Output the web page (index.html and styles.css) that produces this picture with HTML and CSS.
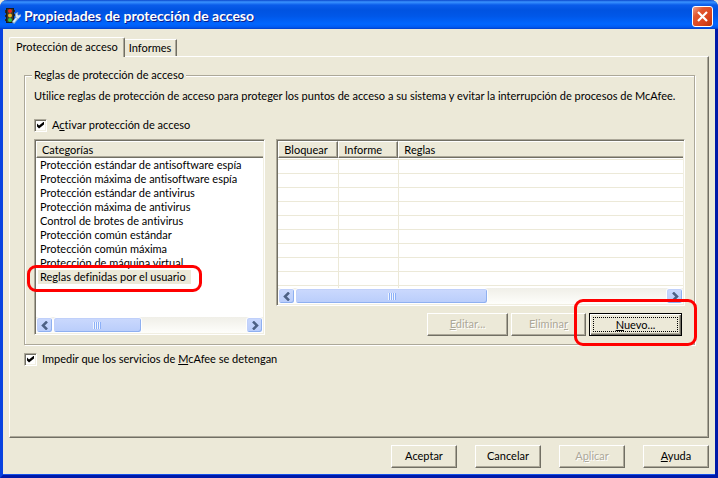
FILE: index.html
```html
<!DOCTYPE html>
<html lang="es">
<head>
<meta charset="utf-8">
<title>Propiedades de protección de acceso</title>
<link rel="stylesheet" href="styles.css">
</head>
<body>
<main class="window">
  <header class="titlebar">
    <svg class="app-icon" width="16" height="16" viewBox="0 0 16 16" aria-hidden="true">
      <path d="M0 2h2v3H0zM0 7h2v2H0zM0 11h2v2H0zM8 2h2v2H8zM8 6h2v2H8z" fill="#2b2b22"/>
      <rect x="1.5" y="0.5" width="7" height="14" fill="#3a3a2c" stroke="#1d1d18"/>
      <circle cx="5" cy="3" r="2" fill="#e8261c"/>
      <circle cx="5" cy="7.500" r="2" fill="#f0b41e"/>
      <circle cx="5" cy="12" r="2" fill="#35c33a"/>
      <path d="M8 15l5-6" stroke="#8fb4d8" stroke-width="3"/>
      <path d="M8.500 14l4-5" stroke="#e6f1fb" stroke-width="1.500"/>
      <path d="M10.500 5.500v3.500l2.500 2 3-3-.5-1.500-2 .8-1-1 .5-2z" fill="#d4e4f4" stroke="#7f9fc4" stroke-width=".6"/>
    </svg>
    <h1 class="title">Propiedades de protección de acceso</h1>
    <button class="close" type="button" aria-label="Cerrar">
      <svg width="13" height="13" viewBox="0 0 13 13" aria-hidden="true"><path d="M2 2l9 9M11 2l-9 9" stroke="#fff" stroke-width="2.200"/></svg>
    </button>
  </header>
  <div class="client">
    <div class="tabs" role="tablist">
      <button class="tab tab-active" type="button" role="tab" aria-selected="true">Protección de acceso</button>
      <button class="tab" type="button" role="tab" aria-selected="false">Informes</button>
    </div>
    <section class="panel">
      <fieldset class="group">
        <legend>Reglas de protección de acceso</legend>
        <p class="intro">Utilice reglas de protección de acceso para proteger los puntos de acceso a su sistema y evitar la interrupción de procesos de McAfee.</p>
        <div class="check">
          <input type="checkbox" id="activate" checked>
          <label for="activate">A<u>c</u>tivar protección de acceso</label>
        </div>
        <div class="columns">
          <div class="listview categories">
            <div class="rows">
              <table>
                <thead><tr><th>Categorías</th></tr></thead>
                <tbody>
                  <tr><td><span>Protección estándar de antisoftware espía</span></td></tr>
                  <tr><td><span>Protección máxima de antisoftware espía</span></td></tr>
                  <tr><td><span>Protección estándar de antivirus</span></td></tr>
                  <tr><td><span>Protección máxima de antivirus</span></td></tr>
                  <tr><td><span>Control de brotes de antivirus</span></td></tr>
                  <tr><td><span>Protección común estándar</span></td></tr>
                  <tr><td><span>Protección común máxima</span></td></tr>
                  <tr><td><span>Protección de máquina virtual</span></td></tr>
                  <tr class="selected"><td><span>Reglas definidas por el usuario</span></td></tr>
                </tbody>
              </table>
            </div>
            <div class="scrollbar">
              <button class="arrow" type="button" aria-label="Izquierda"><svg width="8" height="9" viewBox="0 0 8 9"><path d="M6 .5l-4 4 4 4"/></svg></button>
              <div class="track"><div class="thumb thumb-left"><i class="grip"></i></div></div>
              <button class="arrow" type="button" aria-label="Derecha"><svg width="8" height="9" viewBox="0 0 8 9"><path d="M2 .5l4 4-4 4"/></svg></button>
            </div>
            <div class="mark mark-row"></div>
          </div>
          <div class="right">
            <div class="listview rules">
              <div class="rows">
                <table>
                  <colgroup><col class="col-flag"><col class="col-flag"><col></colgroup>
                  <thead><tr><th>Bloquear</th><th>Informe</th><th>Reglas</th></tr></thead>
                  <tbody>
                    <tr><td></td><td></td><td></td></tr>
                    <tr><td></td><td></td><td></td></tr>
                    <tr><td></td><td></td><td></td></tr>
                    <tr><td></td><td></td><td></td></tr>
                    <tr><td></td><td></td><td></td></tr>
                    <tr><td></td><td></td><td></td></tr>
                    <tr><td></td><td></td><td></td></tr>
                    <tr><td></td><td></td><td></td></tr>
                    <tr><td></td><td></td><td></td></tr>
                    <tr><td></td><td></td><td></td></tr>
                  </tbody>
                </table>
              </div>
              <div class="scrollbar">
                <button class="arrow" type="button" aria-label="Izquierda"><svg width="8" height="9" viewBox="0 0 8 9"><path d="M6 .5l-4 4 4 4"/></svg></button>
                <div class="track"><div class="thumb thumb-right"><i class="grip"></i></div></div>
                <button class="arrow" type="button" aria-label="Derecha"><svg width="8" height="9" viewBox="0 0 8 9"><path d="M2 .5l4 4-4 4"/></svg></button>
              </div>
            </div>
            <div class="actions">
              <button class="btn btn-edit" type="button" disabled><u>E</u>ditar...</button>
              <button class="btn btn-remove" type="button" disabled>Elimina<u>r</u></button>
              <div class="new-wrap">
                <button class="btn btn-default" type="button"><span><u>N</u>uevo...</span></button>
                <div class="mark mark-new"></div>
              </div>
            </div>
          </div>
        </div>
      </fieldset>
      <div class="check check-outer">
        <input type="checkbox" id="prevent" checked>
        <label for="prevent">Impedir que los servicios de <u>M</u>cAfee se detengan</label>
      </div>
    </section>
    <footer class="footer">
      <button class="btn" type="button">Aceptar</button>
      <button class="btn" type="button">Cancelar</button>
      <button class="btn" type="button" disabled>A<u>p</u>licar</button>
      <button class="btn" type="button"><u>A</u>yuda</button>
    </footer>
  </div>
</main>
</body>
</html>
```
FILE: styles.css
```css
:root {
  --face: #ece9d8;
  --shadow: #aca899;
  --dark: #716f64;
}
* { box-sizing: border-box; }
body {
  margin: 0;
  background: #ece9d8;
  color: #000;
  font: 11px/14px Lato, "Liberation Sans", Arial, sans-serif;
  font-variant-ligatures: none;
}
button { font: inherit; font-variant-ligatures: none; color: inherit; padding: 0; border: 0; }
u { text-decoration: underline; text-underline-offset: 1px; }

.window {
  display: flex;
  flex-direction: column;
  min-height: 100vh;
  background: var(--face);
  border: 3px solid #0842e0;
  border-top: 0;
  border-color: #0842e0 #0019a8 #0019a8 #0842e0;
  border-radius: 7px 7px 0 0;
  box-shadow: inset 0 -1px #1550e8;
}
.titlebar {
  display: flex;
  align-items: center;
  height: 29px;
  margin: 0 -3px;
  padding: 3px 5px 0 5px;
  border-radius: 7px 7px 0 0;
  background: linear-gradient(#0a46cc 0, #3a93ff 2px, #0a5cea 5px, #0053e1 10px, #0057e8 16px, #0066ff 24px, #005bf2 27px, #003fcb 29px);
}
.title {
  flex: 1;
  margin: 0 0 0 3px;
  color: #fff;
  font: bold 14px/18px Lato, sans-serif;
  text-shadow: 1px 1px #0a1e8c;
}
.close {
  display: grid;
  place-items: center;
  width: 21px;
  height: 21px;
  border: 1px solid #fff;
  border-radius: 3px;
  background: linear-gradient(135deg, #f0a08a 0, #e2572f 30%, #d9431c 70%, #b83408 100%);
}
.client {
  flex: 1;
  display: flex;
  flex-direction: column;
  padding: 8px 6px 7px;
}

.tabs { display: flex; align-items: flex-end; height: 19px; }
.tab {
  height: 17px;
  padding: 0 5px 0 4px;
  background: var(--face);
  border-top: 1px solid #fff;
  border-right: 1px solid var(--dark);
  box-shadow: inset -1px 0 var(--shadow);
}
.tab-active {
  position: relative;
  height: 20px;
  margin-bottom: -1px;
  padding: 0 6px 2px 6px;
  border-left: 1px solid #fff;
  border-radius: 2px 2px 0 0;
}
.panel {
  flex: 1;
  padding: 11px 13px 0 14px;
  border: 1px solid;
  border-color: #fff var(--dark) var(--dark) #fff;
  box-shadow: inset -1px -1px var(--shadow);
}

.group {
  min-width: 0;
  margin: 0;
  padding: 7px 9px 8px;
  border: 1px solid var(--shadow);
  box-shadow: 1px 1px #fff, inset 1px 1px #fff;
}
.group legend { margin-left: -2px; padding: 0 2px; background: var(--face); }
.intro { margin: 0 0 15px; white-space: nowrap; }
.check { display: flex; align-items: center; gap: 5px; height: 14px; }
.check input {
  appearance: none;
  display: grid;
  place-items: center;
  width: 13px;
  height: 13px;
  margin: 0;
  border: 1px solid;
  border-color: var(--shadow) #fff #fff var(--shadow);
  box-shadow: inset 1px 1px var(--dark), inset -1px -1px #f1efe2;
  background: #fff;
}
.check input:checked::before {
  content: "";
  width: 7px;
  height: 7px;
  background: #000;
  clip-path: polygon(0 28%, 29% 57%, 100% 0, 100% 43%, 29% 100%, 0 72%);
}
.check-outer { margin-top: 7px; }

.columns {
  display: grid;
  grid-template-columns: 231fr 408fr;
  align-items: start;
  gap: 11px;
  margin-top: 7px;
}
.listview {
  position: relative;
  display: flex;
  flex-direction: column;
  min-width: 0;
  background: #fff;
  border: 1px solid;
  border-color: var(--shadow) #fff #fff var(--shadow);
  padding: 1px;
  box-shadow: inset 1px 1px var(--dark), inset -1px -1px #f1efe2;
}
.rows { overflow: hidden; }
.categories .rows { height: 176px; }
.rules .rows { height: 147px; }
.listview table { width: 100%; border-collapse: separate; border-spacing: 0; table-layout: fixed; }
.listview th {
  height: 17px;
  padding: 0 0 0 5px;
  font-weight: normal;
  text-align: left;
  line-height: 14px;
  background: var(--face);
  border-top: 1px solid #fff;
  border-bottom: 1px solid var(--dark);
  border-left: 1px solid #fff;
  box-shadow: inset 0 -1px var(--shadow);
}
.rules th:not(:last-child) {
  border-right: 1px solid var(--dark);
  box-shadow: inset -1px -1px var(--shadow);
}
.rules tbody::before { content: ""; display: table-row; height: 1px; }
.rules .col-flag { width: 60px; }
.listview td { height: 14px; padding: 0 0 0 2px; white-space: nowrap; }
.listview td span { display: inline-block; padding: 0 5px 0 2px; vertical-align: top; }
.rules td { border-top: 1px solid var(--face); border-left: 1px solid var(--face); }
.rules td:first-child { border-left: 0; }
.selected span { background: var(--face); }

.scrollbar { display: flex; height: 16px; background: linear-gradient(#f0efe8, #fefefb); }
.arrow, .thumb {
  border: 1px solid #fff;
  border-radius: 3px;
  background: linear-gradient(#cbd9fd, #b9cdfb);
  box-shadow: inset -1px -1px #8fb0f0, inset 1px 1px #c0d0fa;
}
.arrow { display: grid; place-items: center; width: 17px; height: 16px; }
.arrow path { fill: none; stroke: #4d6185; stroke-width: 2.5; }
.track { flex: 1; }
.thumb { display: grid; place-items: center; height: 16px; }
.thumb-left { width: 46%; }
.thumb-right { width: 52%; }
.grip { width: 8px; height: 7px; background: repeating-linear-gradient(90deg, #eef4fe 0 1px, #8cb0f8 1px 2px); }

.actions { display: flex; justify-content: flex-end; gap: 3px; margin-top: 7px; padding-right: 3px; }
.btn {
  width: 66px;
  height: 23px;
  padding-bottom: 2px;
  background: var(--face);
  border: 1px solid;
  border-color: #fff var(--dark) var(--dark) #fff;
  box-shadow: inset -1px -1px var(--shadow);
}
.btn:disabled { color: var(--shadow); text-shadow: 1px 1px #fff; }
.btn-edit { width: 81px; }
.btn-remove { width: 75px; }
.new-wrap { position: relative; }
.btn-default {
  display: grid;
  width: 93px;
  padding: 3px;
  border-color: #000;
  box-shadow: inset 1px 1px #fff, inset -1px -1px var(--dark), inset -2px -2px var(--shadow);
}
.btn-default span { border: 1px dotted #000; line-height: 13px; }
.footer { display: flex; justify-content: flex-end; gap: 18px; margin-top: 7px; }

.mark { position: absolute; border: 3px solid #f00; border-radius: 9px; pointer-events: none; }
.mark-row { top: 125px; left: -8px; width: 175px; height: 27px; }
.mark-new { inset: -14px -15px -10px -15px; }
```
